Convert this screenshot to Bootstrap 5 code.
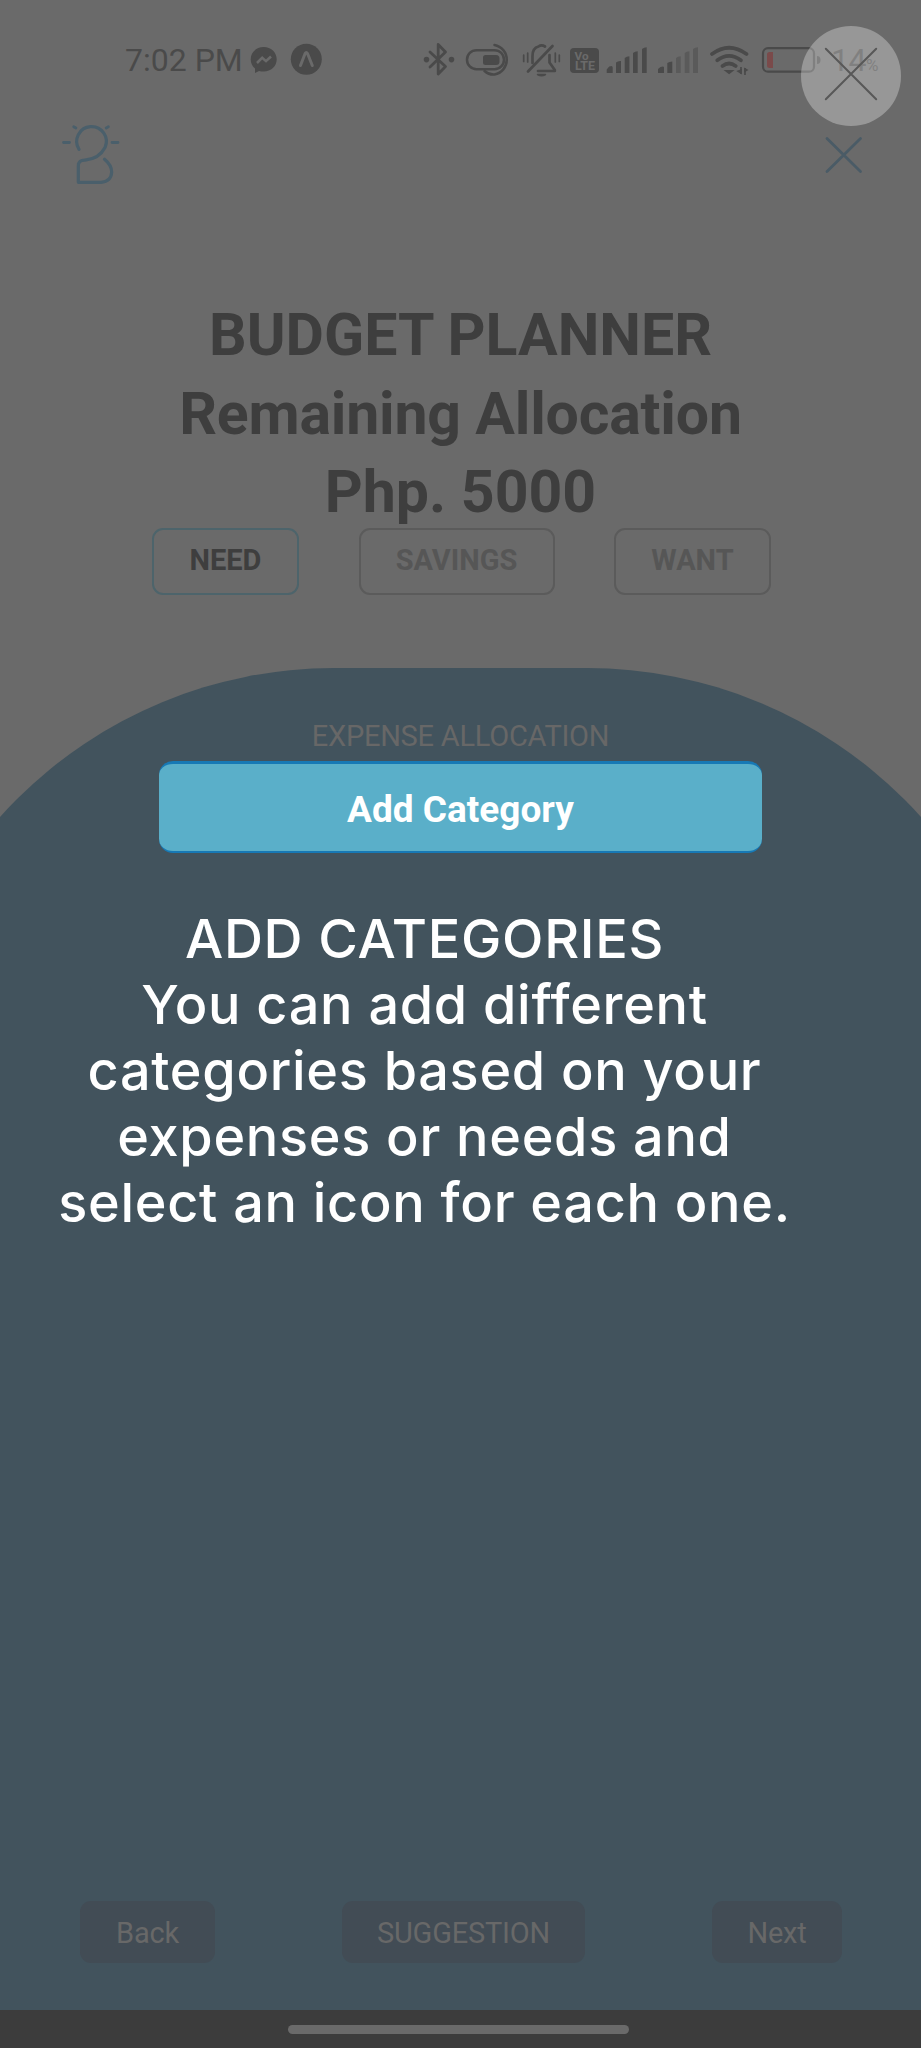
<!DOCTYPE html>
<html lang="en">
<head>
<meta charset="utf-8">
<meta name="viewport" content="width=device-width, initial-scale=1">
<title>Budget Planner</title>
<link href="https://cdn.jsdelivr.net/npm/bootstrap@5.3.0/dist/css/bootstrap.min.css" rel="stylesheet">
<style>
  body { background: #6a6a6a; font-family: Roboto, sans-serif; color: #3e3e3e; }
  .screen { width: 921px; height: 2048px; }
  .status { height: 112px; padding: 40px 0 0 125px; color: #4a4a4a; }
  .status svg, .brand-row svg { display: block; flex: none; }
  .clock { font-size: 32px; line-height: 40px; width: 120px; flex: none; }
  .level { width: 70px; margin-left: 6px; letter-spacing: -.5px; }
  .level small { font-size: 17px; }
  .brand-row { height: 184px; padding: 8px 54px 0 56px; }
  .title { font-size: 59px; line-height: 78.6px; font-weight: 700; height: 232px; }
  .title .amount-label { letter-spacing: -.2px; }
  .tabs { padding: 0 150px 0 152px; height: 140px; }
  .tab { height: 67px; border: 2px solid #5b5b5b; border-radius: 11px; font-size: 29px; font-weight: 700; color: #565656; padding: 0 0 3px; line-height: 1; }
  .tab.on { border-color: #4d646b; color: #3e3e3e; }
  .dome { height: 1342px; }
  .dome::before { content: ""; position: absolute; top: 0; bottom: 0; left: -12.5%; width: 125%; background: #42535d; border-radius: 449px 449px 0 0; }
  .label-top { font-size: 29px; letter-spacing: -.25px; line-height: 40px; padding-top: 48px; height: 93px; color: #676767; }
  .add { width: 603px; height: 92px; border: solid #1779b5; border-width: 3px 0 2px; border-radius: 14px; background: #5aafc9; color: #fff; font-size: 37px; font-weight: 700; line-height: 1; padding: 4px 0 0; }
  .coach { font-family: Inter, sans-serif; font-size: 54px; font-weight: 500; letter-spacing: .7px; line-height: 66.1px; color: #fff; width: 849px; padding-top: 53px; }
  .actions { padding: 0 79px 47px 80px; }
  .act { height: 62px; background: #424c55; color: #686868; border: 0; border-radius: 11px; font-size: 29px; letter-spacing: -.2px; line-height: 1; padding: 3px 0 0; }
  .home { height: 38px; background: #3c3c3c; padding-top: 15px; }
  .pill { width: 341px; height: 9px; background: #6a6a6a; }
  .skip { top: 26px; left: 801px; width: 100px; height: 100px; background: rgba(255,255,255,.3); border: 0; padding: 0; }
</style>
</head>
<body>
<main class="screen position-relative overflow-hidden d-flex flex-column">
  <div class="status d-flex align-items-start">
    <span class="clock text-nowrap">7:02 PM</span>
    <svg width="80" height="40" viewBox="245 40 80 40">
      <path fill="#4a4a4a" d="M263.700 47c-7.300 0-13 5.300-13 12.300 0 3.900 1.600 7 4.300 9.300v4.400l4-2.100c1.500.5 3 .7 4.700.7 7.300 0 13-5.300 13-12.300S271 47 263.700 47z"/>
      <path d="M257 63l5.200-5.300 3.800 3.400 5-4.600" fill="none" stroke="#6a6a6a" stroke-width="2.600"/>
      <circle cx="306.300" cy="59.300" r="15.500" fill="#4a4a4a"/>
      <path d="M300.500 65.500l4.600-12q1.200-2 2.400 0l4.800 12" fill="none" stroke="#6a6a6a" stroke-width="3" stroke-linecap="round" stroke-linejoin="round"/>
    </svg>
    <svg width="500" height="40" viewBox="325 40 500 40" fill="none" stroke="#4a4a4a">
      <g stroke-width="2.800" stroke-linejoin="round" stroke-linecap="round">
        <path d="M430 52l15.500 14.500-7.300 7.500V44.500l7.300 7.500L430 67"/>
        <circle cx="426.500" cy="59.600" r="1.400" fill="#4a4a4a"/><circle cx="451.500" cy="59.600" r="1.400" fill="#4a4a4a"/>
      </g>
      <g stroke-width="2.500" stroke-linecap="round">
        <rect x="467" y="50.200" width="37" height="19" rx="9.500"/>
        <path d="M494.500 45a15 15 0 0 1 0 29.500q-5.500.5-10-3.500"/>
        <path d="M485.500 55H496q3.500 0 3.500 3.500v3q0 3.500-3.500 3.500h-10.500q-2.500 0-2.500-2.500v-5q0-2.500 2.500-2.500z" fill="#4a4a4a" stroke="none"/>
      </g>
      <g stroke-width="2.700" stroke-linecap="round" stroke-linejoin="round">
        <path d="M528 71.500L552.500 46"/>
        <path d="M532.500 63V56q0-8 6-9.500 3-2.200 6.500 0M549.500 55v7.500l5.300 7.500v1H538"/>
        <path d="M537.500 74.500h8q-4 2.500-8 0z" stroke-width="1.500" fill="#4a4a4a"/>
        <path d="M523.700 55v6.500M527.700 53v9M555.300 53v9M559.300 55v6.500" stroke-width="1.700"/>
      </g>
      <rect x="570" y="48" width="29" height="25" rx="4" fill="#4a4a4a" stroke="none"/>
      <g fill="#6a6a6a" stroke="none" font-family="Roboto, sans-serif" font-weight="700">
        <text x="574.500" y="59.500" font-size="11.500" textLength="14" lengthAdjust="spacingAndGlyphs">Vo</text>
        <text x="575" y="70" font-size="12" textLength="20" lengthAdjust="spacingAndGlyphs">LTE</text>
      </g>
      <g fill="#4a4a4a" stroke="none">
        <path d="M606.700 73v-3.500l2.500-3q3.500-1.500 3.500 1v5.500zM616 73V62.500q2-1.800 5-1.500v12zM624.700 73V58q2-1.800 4.700-1.800V73zM633 73V53q2-1.800 4.700-1.800V73zM642 73V49q2-1.800 4.700-1.800V73z"/>
        <path d="M658 73v-4l2.500-2q3.500-1.200 3.500.5V73zM667.300 73V63q2-1.500 5-1.500V73z"/>
        <path fill="#5a5a5a" d="M676 73V58q2-1.800 4.700-1.800V73zM684.700 73V53q2-1.800 4.700-1.800V73zM693 73V49q2-1.800 5-1.800V73z"/>
      </g>
      <g stroke-width="3.700" stroke-linecap="round">
        <path d="M712 54q17-12.500 34.500 0M717.300 60.300q11.700-9 23.600 0M722.500 66q6.500-5 13.200 0"/>
        <path d="M726.500 71h5.200l-2.600 2z" stroke-width="2"/>
      </g>
      <path d="M741 67v7M745 75v-7" stroke-width="1.700"/><path d="M741.800 74.500v-5.500l-5.500 2zM744.200 67.500v5l4.300-2.500z" fill="#4a4a4a" stroke="none"/>
      <rect x="763" y="48.200" width="51" height="23.500" rx="5" stroke-width="2.200"/>
      <path d="M769.500 52h3.500v16h-3.500q-2.500 0-2.500-2.500v-11q0-2.500 2.500-2.500z" fill="#7a4a4a" stroke="none"/>
      <path d="M817 56q3.500 0 3.500 4t-3.500 4z" fill="#4a4a4a" stroke="none"/>
    </svg>
    <span class="clock level text-nowrap">14<small>%</small></span>
  </div>

  <div class="brand-row d-flex justify-content-between align-items-start">
    <svg width="70" height="70" viewBox="56 120 70 70" fill="none" stroke="#4a5f6b" stroke-width="3.200" stroke-linecap="round" stroke-linejoin="round">
      <path d="M79 149.300A14.800 14.800 0 1 1 105 147.500Q99.500 158.500 85 160.200Q78.300 160 78.300 166V182.300H101Q111.200 181.500 111.700 172Q111.500 165 104.500 159.300"/>
      <path d="M63.500 142.500h6M112 142.500h6M73.700 126.700l2.200 1.300M108.400 126.700l-2.200 1.300" stroke-width="2.800"/>
    </svg>
    <svg width="48" height="60" viewBox="819 120 48 60" stroke="#4a5b66" stroke-width="2.800" stroke-linecap="round"><path d="M827 138.500l33.500 33M860.500 138.500l-33.500 33"/></svg>
  </div>

  <h1 class="title text-center m-0">BUDGET PLANNER<br><span class="amount-label">Remaining Allocation</span><br>Php. 5000</h1>

  <div class="tabs d-flex justify-content-between align-items-start">
    <button class="btn tab on" style="width:147px">NEED</button>
    <button class="btn tab" style="width:196px">SAVINGS</button>
    <button class="btn tab" style="width:157px">WANT</button>
  </div>

  <section class="dome position-relative d-flex flex-column">
    <div class="position-relative flex-grow-1 d-flex flex-column align-items-center">
      <div class="label-top">EXPENSE ALLOCATION</div>
      <button class="btn add">Add Category</button>
      <p class="coach text-center m-0 align-self-start">ADD CATEGORIES<br>You can add different<br>categories based on your<br>expenses or needs and<br>select an icon for each one.</p>
    </div>
    <div class="actions position-relative d-flex justify-content-between">
      <button class="btn act" style="width:135px">Back</button>
      <button class="btn act" style="width:243px">SUGGESTION</button>
      <button class="btn act" style="width:130px">Next</button>
    </div>
  </section>

  <div class="home d-flex justify-content-center align-items-start"><div class="pill rounded-pill me-1"></div></div>

  <button class="skip position-absolute rounded-circle" aria-label="Skip tour">
    <svg class="d-block" width="100" height="100" viewBox="801 26 100 100" stroke="#585858" stroke-width="2" stroke-linecap="round"><path d="M825.800 48.800l50.400 50.400M876.200 48.800l-50.400 50.400"/></svg>
  </button>
</main>
<script src="https://cdn.jsdelivr.net/npm/bootstrap@5.3.0/dist/js/bootstrap.bundle.min.js"></script>
</body>
</html>
